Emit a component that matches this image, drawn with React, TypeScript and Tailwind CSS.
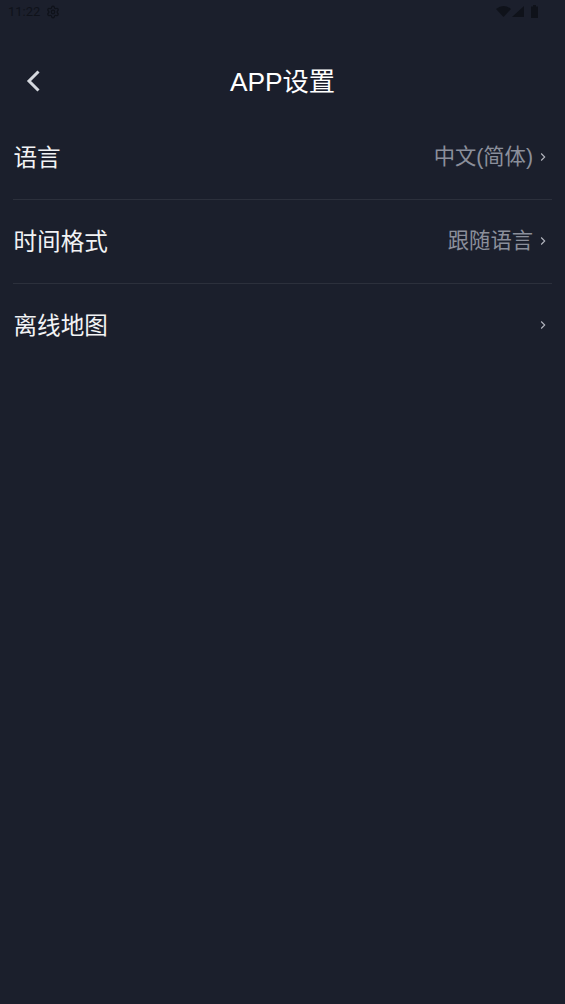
import React from 'react';
import { Settings } from 'lucide-react';

const font = { fontFamily: '"Liberation Sans", "Noto Sans CJK SC", sans-serif' };

const rows = [
  { label: '语言', value: '中文(简体)' },
  { label: '时间格式', value: '跟随语言' },
  { label: '离线地图', value: '' },
];

const Chevron = () => (
  <svg width="6" height="10" viewBox="0 0 6 10" fill="none" className="ml-[7px] mt-[-1px]">
    <path d="M1.2 1.5L4.7 5 1.2 8.5" stroke="#b4b7c0" strokeWidth="1.1" />
  </svg>
);

const StatusBar = () => (
  <div className="h-[23px] flex items-center justify-between pl-2 pr-[26px] text-[#0f121a]">
    <div className="flex items-center gap-[6px]">
      <span className="text-[13px] leading-none" style={{ fontFamily: 'Roboto, sans-serif' }}>11:22</span>
      <Settings size={14} strokeWidth={2.2} />
    </div>
    <div className="flex items-center gap-[1px]">
      <svg width="15" height="11" viewBox="0 0 15 11" fill="currentColor">
        <path d="M0 3q7.5-6 15 0L7.5 11z" />
      </svg>
      <svg width="12" height="11" viewBox="0 0 12 11" fill="currentColor">
        <path d="M12 0v11H0z" />
      </svg>
      <svg width="9" height="13" viewBox="0 0 9 13" fill="currentColor" className="ml-[5px]">
        <path d="M3 0h3v1.5h2V13H1V1.5h2z" />
      </svg>
    </div>
  </div>
);

export default function App() {
  return (
    <div className="min-h-[1004px] bg-[#1b1f2c] flex flex-col" style={font}>
      <StatusBar />
      <div className="relative h-[93px] flex items-center justify-center pt-[25px]">
        <button className="absolute left-[25px] top-[46px]">
          <svg width="16" height="24" viewBox="0 0 16 24" fill="none">
            <path d="M13.5 2.5L4 12l9.5 9.5" stroke="#d5d8de" strokeWidth="3" />
          </svg>
        </button>
        <h1 className="text-[26.3px] leading-none text-white">APP设置</h1>
      </div>
      <div className="px-[13px]">
        {rows.map((row, i) => (
          <div
            key={row.label}
            className={`h-[84px] flex items-center justify-between pr-[6px] border-b ${i < rows.length - 1 ? 'border-[#2c303c]' : 'border-transparent'}`}
          >
            <span className="ml-[0.5px] mt-[2px] text-[23.6px] leading-none text-[#f2f3f5]">{row.label}</span>
            <div className="flex items-center">
              <span className="mt-[1px] text-[21.3px] leading-none text-[#8b8f9b]">{row.value}</span>
              <Chevron />
            </div>
          </div>
        ))}
      </div>
    </div>
  );
}
